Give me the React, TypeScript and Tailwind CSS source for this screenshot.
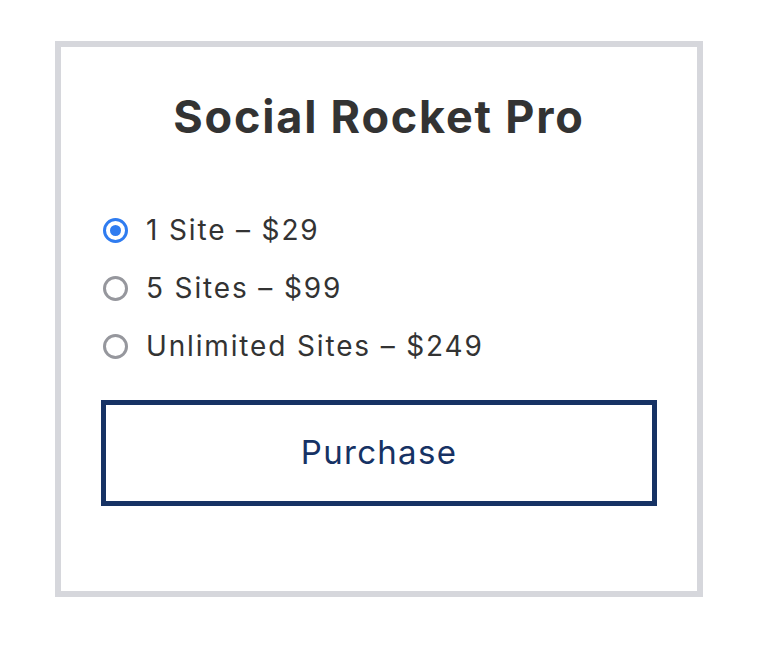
import { useState } from 'react';

const PLANS = [
  { id: '1', label: '1 Site – $29' },
  { id: '5', label: '5 Sites – $99' },
  { id: 'unlimited', label: 'Unlimited Sites – $249' },
];

export default function App() {
  const [selected, setSelected] = useState('1');

  return (
    <div className="min-h-screen bg-white pt-[41px] pl-[55px] font-['Inter','Noto_Sans',sans-serif]">
      <div className="w-[648px] h-[556px] border-[6px] border-[#d6d7dc] bg-white px-10 pt-[47px]">
        <h1 className="text-center text-[45px] leading-[46px] font-bold tracking-[1.8px] text-[#333333]">
          Social Rocket Pro
        </h1>

        <div className="mt-[61px]">
          {PLANS.map((plan) => {
            const active = selected === plan.id;
            return (
              <label
                key={plan.id}
                onClick={() => setSelected(plan.id)}
                className="flex h-[58px] cursor-pointer items-center gap-[18px] pl-[2px]"
              >
                <span
                  className={
                    active
                      ? 'flex h-[25px] w-[25px] items-center justify-center rounded-full border-[3px] border-[#2f7cf0]'
                      : 'flex h-[25px] w-[25px] items-center justify-center rounded-full border-[3px] border-[#96979d]'
                  }
                >
                  {active && <span className="h-[11px] w-[11px] rounded-full bg-[#2f7cf0]" />}
                </span>
                <span className="text-[28px] leading-none tracking-[1.85px] text-[#333333]">{plan.label}</span>
              </label>
            );
          })}
        </div>

        <button className="mt-[25px] flex h-[106px] w-full items-center justify-center border-[5px] border-[#163264] bg-white text-[33px] tracking-[1.3px] text-[#163264]">
          Purchase
        </button>
      </div>
    </div>
  );
}
